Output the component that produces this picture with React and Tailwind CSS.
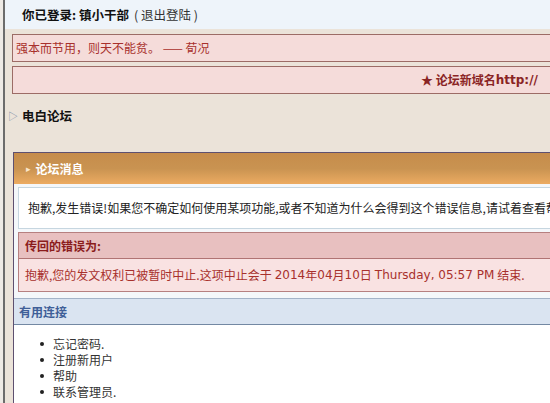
const FONT = { fontFamily: '"DejaVu Sans", "Noto Sans CJK SC", sans-serif' };
const CJK = { fontFamily: '"Noto Sans CJK SC", "DejaVu Sans", sans-serif' };

const links = [ '忘记密码.', '注册新用户', '帮助', '联系管理员.' ];

export default function App() {
  return (
    <div className="h-[403px] w-full overflow-hidden bg-[#eeeae5] pl-[3px] text-[12px] leading-[16px] text-[#222]" style={ CJK }>
      <div className="h-full w-[760px] border-l-2 border-[#6c6c6c] bg-[#ebe3d9]">
        {/* login bar */}
        <div className="flex h-[29px] items-center bg-[#eef4fa] pl-[17px]">
          <span className="text-[12.5px] font-bold text-[#111]">你已登录: 镇小干部</span>
          <span className="ml-[5px] text-[12.5px] text-[#333]">( 退出登陆 )</span>
        </div>

        {/* quote */}
        <div className="ml-[7px] mt-[5px] flex h-[28px] items-center border border-[#9c6c66] bg-[#f5dcda] pl-[3px] text-[#a8302c]">
          强本而节用，则天不能贫。 —— 荀况
        </div>

        {/* notice */}
        <div className="ml-[7px] mt-[4px] flex h-[28px] items-center whitespace-nowrap border border-[#9c6c66] bg-[#f5dcda] pl-[408px] font-bold text-[#8a2424]">
          <span>★ 论坛新域名</span>
          <span style={ FONT }>http://</span>
        </div>

        {/* forum name */}
        <div className="mt-[14px] flex items-center pl-[3px]">
          <span className="text-[10px] text-[#7d8ea6]">▷</span>
          <span className="ml-[4px] text-[12.5px] font-bold text-[#111]">电白论坛</span>
        </div>

        {/* message box */}
        <div className="ml-[8px] mt-[28px] border-l border-t border-[#5e5070] bg-[#f4f7fa]">
          <div className="flex h-[31px] items-center bg-gradient-to-b from-[#c68c4b] via-[#c99351] to-[#ecab62] pl-[12px] font-bold text-white">
            <span className="text-[9px] text-[#fbe6c8]">▸</span>
            <span className="ml-[5px]">论坛消息</span>
          </div>

          <div className="px-[4px] pb-[6px] pt-[3px]">
            <div className="flex h-[42px] items-center whitespace-nowrap border border-[#c6d6e0] bg-white pl-[9px] text-[#222]">
              抱歉,发生错误!如果您不确定如何使用某项功能,或者不知道为什么会得到这个错误信息,请试着查看帮助文件.
            </div>

            <div className="mt-[3px] border border-[#b68080]">
              <div className="flex h-[26px] items-center border-b border-[#b07474] bg-[#e8c0c0] pl-[6px] font-bold text-[#8b1c1c]">
                传回的错误为:
              </div>
              <div className="flex h-[32px] items-center whitespace-nowrap bg-[#f9e2e2] pl-[6px] text-[#a8302c]">
                抱歉,您的发文权利已被暂时中止.这项中止会于 <span className="ml-[3px]" style={ FONT }>2014</span>年<span style={ FONT }>04</span>月<span style={ FONT }>10</span>日 <span className="ml-[3px]" style={ FONT }>Thursday, 05:57 PM</span><span className="ml-[3px]">结束.</span>
              </div>
            </div>
          </div>

          <div className="flex h-[27px] items-center border-b border-t border-b-[#7388a3] border-t-[#a3b3c8] bg-[#dae4f1] pl-[5px] font-bold text-[#3f5f98]">
            有用连接
          </div>

          <div className="bg-white pb-[10px] pl-[26px] pt-[11px]">
            { links.map( ( label ) => (
              <div key={ label } className="flex h-[16px] items-center text-[#333]">
                <span className="h-[4px] w-[4px] rounded-full bg-[#222]" />
                <span className="ml-[9px]">{ label }</span>
              </div>
            ) ) }
          </div>
        </div>
      </div>
    </div>
  );
}
